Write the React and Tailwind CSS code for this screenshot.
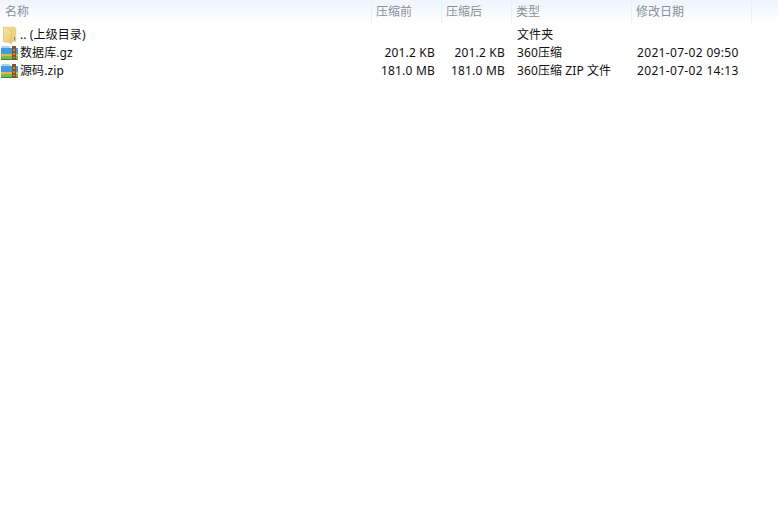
import React from "react";

const font = { fontFamily: '"Noto Sans", "Noto Sans CJK SC", sans-serif' };

const columns = [
  { label: "名称", w: "w-[372px]", pad: "pl-[5px]" },
  { label: "压缩前", w: "w-[70px]", pad: "pl-[4px]" },
  { label: "压缩后", w: "w-[70px]", pad: "pl-[4px]" },
  { label: "类型", w: "w-[120px]", pad: "pl-[4px]" },
  { label: "修改日期", w: "w-[120px]", pad: "pl-[4px]" },
];

const rows = [
  { icon: "folder", name: ".. (上级目录)", before: "", after: "", type: "文件夹", date: "" },
  { icon: "archive", name: "数据库.gz", before: "201.2 KB", after: "201.2 KB", type: "360压缩", date: "2021-07-02 09:50" },
  { icon: "archive", name: "源码.zip", before: "181.0 MB", after: "181.0 MB", type: "360压缩 ZIP 文件", date: "2021-07-02 14:13" },
];

function FolderIcon() {
  return (
    <svg width="16" height="18" viewBox="0 0 16 18" className="shrink-0 ml-[2px] mr-[2px]">
      <defs>
        <linearGradient id="folderBack" x1="0" y1="0" x2="1" y2="0">
          <stop offset="0" stopColor="#f9eebb" />
          <stop offset="1" stopColor="#ecd078" />
        </linearGradient>
        <linearGradient id="folderFront" x1="0" y1="0" x2="1" y2="1">
          <stop offset="0" stopColor="#f8e9ae" />
          <stop offset="1" stopColor="#e8c568" />
        </linearGradient>
      </defs>
      <path d="M1.5 1h11l1.5 2v12.5H1.5z" fill="url(#folderBack)" stroke="#e0c883" strokeWidth="0.5" />
      <path d="M1.5 1l8.5 3v13.5l-8.5-2z" fill="url(#folderFront)" stroke="#d8b558" strokeWidth="0.5" />
      <rect x="12" y="11" width="1" height="3.5" fill="#4a90d0" />
    </svg>
  );
}

function ArchiveIcon() {
  return (
    <svg width="18" height="16" viewBox="0 0 18 16" className="shrink-0 ml-[1px] mr-[1px]">
      <path d="M0 3l1-2h7l2 2z" fill="#a6d3f5" />
      <rect x="0" y="3" width="17" height="6" fill="#3f9ae0" />
      <rect x="0" y="9" width="17" height="2" fill="#efb04a" />
      <rect x="0" y="11" width="17" height="3" fill="#72bd4c" />
      <rect x="0" y="14" width="17" height="1" fill="#3f7f3a" />
      <rect x="11" y="1" width="4" height="14" fill="#7f5426" />
      <rect x="12.5" y="4" width="1" height="2" fill="#f0c870" />
      <rect x="12.5" y="8" width="1" height="2" fill="#f0c870" />
      <rect x="12.5" y="12" width="1" height="1" fill="#f0c870" />
    </svg>
  );
}

export default function App() {
  return (
    <div className="w-[778px] h-[526px] bg-white overflow-hidden text-[12px] text-[#111]" style={font}>
      <div className="flex h-[23px] bg-gradient-to-b from-[#eef5fd] to-white">
        {columns.map((c) => (
          <div key={c.label} className={`${c.w} ${c.pad} h-full flex items-center text-[#8a9098] border-r border-[#eaf0f6]`}>
            {c.label}
          </div>
        ))}
      </div>
      <div className="pt-[3px]">
        {rows.map((r) => (
          <div key={r.name} className="flex h-[18px] items-center leading-[18px]">
            <div className="w-[371px] flex items-center">
              {r.icon === "folder" ? <FolderIcon /> : <ArchiveIcon />}
              <span className="tracking-[0.1px]">{r.name}</span>
            </div>
            <div className="w-[64px] text-right tracking-[0.2px]">{r.before}</div>
            <div className="w-[70px] text-right tracking-[0.2px]">{r.after}</div>
            <div className="w-[132px] pl-[12px] tracking-[0.1px]">{r.type}</div>
            <div className="tracking-[0.33px]">{r.date}</div>
          </div>
        ))}
      </div>
    </div>
  );
}
